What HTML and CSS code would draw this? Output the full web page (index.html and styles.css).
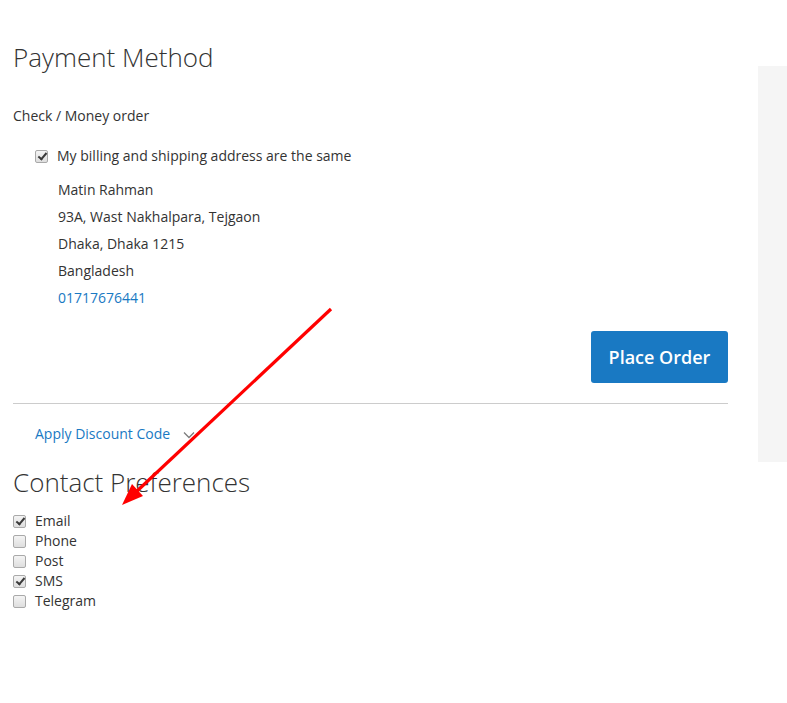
FILE: index.html
```html
<!DOCTYPE html>
<html lang="en">
<head>
<meta charset="utf-8">
<title>Checkout - Payment Method</title>
<link rel="stylesheet" href="styles.css">
</head>
<body>
<div class="page">
  <main class="main">
    <h2 class="step-title">Payment Method</h2>
    <div class="method-title">Check / Money order</div>
    <label class="same-address"><input type="checkbox" class="cb" checked><span>My billing and shipping address are the same</span></label>
    <div class="address">
      <div>Matin Rahman</div>
      <div>93A, Wast Nakhalpara, Tejgaon</div>
      <div>Dhaka, Dhaka 1215</div>
      <div>Bangladesh</div>
      <div><a href="#" class="link">01717676441</a></div>
    </div>
    <div class="actions">
      <button class="btn-primary" type="button">Place Order</button>
    </div>
    <div class="discount">
      <a href="#" class="link">Apply Discount Code</a>
      <svg class="chevron" width="12" height="8" viewBox="0 0 12 8"><path d="M1 1.5 L6 6.5 L11 1.5" fill="none" stroke="#7d7d7d" stroke-width="1.3"/></svg>
    </div>
    <h2 class="step-title contact-title">Contact Preferences</h2>
    <ul class="prefs">
      <li><label><input type="checkbox" class="cb" checked><span>Email</span></label></li>
      <li><label><input type="checkbox" class="cb"><span>Phone</span></label></li>
      <li><label><input type="checkbox" class="cb"><span>Post</span></label></li>
      <li><label><input type="checkbox" class="cb" checked><span>SMS</span></label></li>
      <li><label><input type="checkbox" class="cb"><span>Telegram</span></label></li>
    </ul>
  </main>
  <aside class="sidebar"></aside>
</div>
<svg class="annotation" width="787" height="703" viewBox="0 0 787 703">
  <line x1="331" y1="309" x2="136" y2="492" stroke="#ff0000" stroke-width="3.2"/>
  <polygon points="122,505 143,496 132,484" fill="#ff0000"/>
</svg>
</body>
</html>
```

FILE: styles.css
```css
html, body {
  margin: 0;
  padding: 0;
  background: #ffffff;
}
body {
  font-family: "Open Sans", "Liberation Sans", sans-serif;
  font-size: 14px;
  line-height: 20px;
  color: #333333;
  position: relative;
  min-height: 703px;
}
.page {
  display: flex;
  align-items: flex-start;
}
.main {
  width: 715px;
  margin-left: 13px;
  padding-top: 42px;
}
.sidebar {
  flex: 1;
  margin-left: 30px;
  margin-top: 66px;
  height: 396px;
  background: #f5f5f5;
}
.step-title {
  margin: 0;
  font-size: 26px;
  font-weight: 300;
  line-height: 30px;
  color: #333333;
}
.method-title {
  margin-top: 34px;
}
.same-address {
  display: flex;
  align-items: center;
  margin-top: 20px;
  margin-left: 22px;
  gap: 9px;
}
.address {
  margin-top: 10px;
  margin-left: 45px;
  line-height: 27px;
}
.link {
  color: #1979c3;
  text-decoration: none;
}
.actions {
  display: flex;
  justify-content: flex-end;
  margin-top: 20px;
  padding-bottom: 20px;
  border-bottom: 1px solid #cccccc;
}
.btn-primary {
  width: 137px;
  height: 52px;
  border: 0;
  border-radius: 3px;
  background: #1979c3;
  color: #ffffff;
  font-family: "Open Sans", "Liberation Sans", sans-serif;
  font-size: 18px;
  font-weight: 600;
  padding: 0;
  cursor: pointer;
}
.discount {
  display: flex;
  align-items: center;
  margin-top: 20px;
  margin-left: 22px;
  gap: 13px;
}
.chevron {
  margin-top: 2px;
}
.contact-title {
  margin-top: 23px;
}
.prefs {
  list-style: none;
  margin: 14px 0 0;
  padding: 0;
}
.prefs label {
  display: flex;
  align-items: center;
  gap: 9px;
}
.cb {
  -webkit-appearance: none;
  appearance: none;
  box-sizing: border-box;
  width: 13px;
  height: 13px;
  margin: 0;
  border: 1px solid #a9a9a9;
  border-radius: 2px;
  background: linear-gradient(#f4f4f4, #dedede);
  position: relative;
  flex: none;
}
.cb:checked::after {
  content: "";
  position: absolute;
  left: 3.5px;
  top: 0.5px;
  width: 3px;
  height: 7px;
  border-right: 2.2px solid #3a3a3a;
  border-bottom: 2.2px solid #3a3a3a;
  transform: rotate(40deg);
}
.annotation {
  position: absolute;
  left: 0;
  top: 0;
  pointer-events: none;
}
```
